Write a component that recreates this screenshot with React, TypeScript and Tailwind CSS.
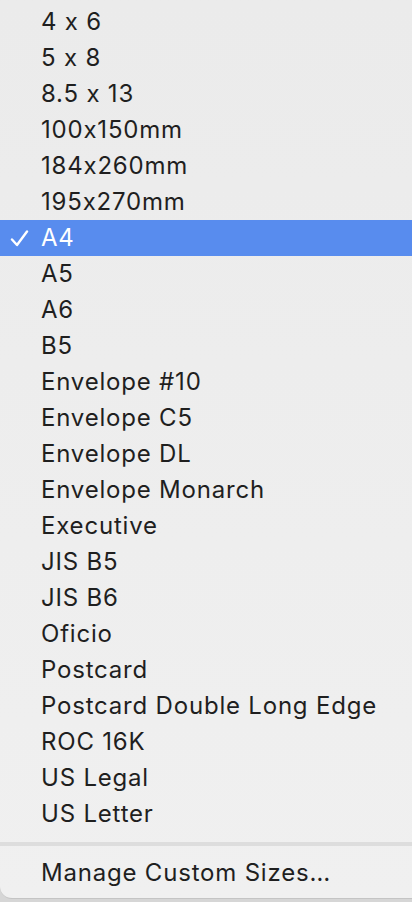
import React from "react";

const sizes = [
  "4 x 6",
  "5 x 8",
  "8.5 x 13",
  "100x150mm",
  "184x260mm",
  "195x270mm",
  "A4",
  "A5",
  "A6",
  "B5",
  "Envelope #10",
  "Envelope C5",
  "Envelope DL",
  "Envelope Monarch",
  "Executive",
  "JIS B5",
  "JIS B6",
  "Oficio",
  "Postcard",
  "Postcard Double Long Edge",
  "ROC 16K",
  "US Legal",
  "US Letter",
];

const Check = () => (
  <svg width="19" height="17" viewBox="0 0 19 17" className="absolute left-[10px] top-[10px]">
    <path d="M2 9.5 L7 15 L17 1.5" fill="none" stroke="white" strokeWidth="2.4" strokeLinecap="round" strokeLinejoin="round" />
  </svg>
);

export default function App() {
  const selected = "A4";
  return (
    <div className="w-[412px] h-[902px] bg-[#d6d6d6] overflow-hidden">
      <div
        className="flex flex-col h-[899px] pt-1 rounded-bl-[12px] bg-gradient-to-b from-[#ebebeb] to-[#f0f0f0] border-b border-[#c4c4c4] text-[24px] tracking-[0.8px] text-[#1f1f1f]"
        style={{ fontFamily: "Inter, 'Liberation Sans', sans-serif" }}
      >
        {sizes.map((s) => (
          <div
            key={s}
            className={
              s === selected
                ? "relative h-9 flex items-center pl-[41px] bg-[#588cee] text-white"
                : "relative h-9 flex items-center pl-[41px]"
            }
          >
            {s === selected && <Check />}
            {s}
          </div>
        ))}
        <div className="mt-[10px] h-1 bg-[#dddddd]" />
        <div className="h-9 mt-[9px] flex items-center pl-[41px]">Manage Custom Sizes…</div>
      </div>
    </div>
  );
}
